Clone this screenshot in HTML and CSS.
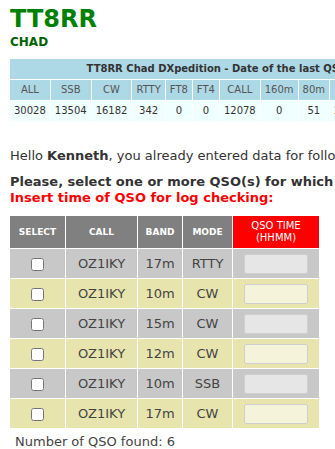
FILE: index.html
```html
<!DOCTYPE html>
<html>
<head>
<meta charset="utf-8">
<title>TT8RR</title>
<link rel="stylesheet" href="styles.css">
</head>
<body>
<div class="page">
  <h1 class="call">TT8RR</h1>
  <h2 class="country">CHAD</h2>

  <div class="stats-wrap">
    <table class="stats">
      <tr><td class="stats-title" colspan="17">TT8RR Chad DXpedition - Date of the last QSO in the log: 2024-04-17 11:35Z</td></tr>
      <tr class="stats-head">
        <td>ALL</td><td>SSB</td><td>CW</td><td>RTTY</td><td>FT8</td><td>FT4</td><td>CALL</td>
        <td>160m</td><td>80m</td><td>40m</td><td>30m</td><td>20m</td><td>17m</td><td>15m</td><td>12m</td><td>10m</td><td>6m</td>
      </tr>
      <tr class="stats-data">
        <td>30028</td><td>13504</td><td>16182</td><td>342</td><td>0</td><td>0</td><td>12078</td>
        <td>0</td><td>51</td><td>2361</td><td>2950</td><td>6405</td><td>5727</td><td>5463</td><td>3794</td><td>3277</td><td>0</td>
      </tr>
    </table>
  </div>

  <p class="hello">Hello <b>Kenneth</b>, you already entered data for following QSO(s) with TT8RR:</p>
  <p class="select-msg">Please, select one or more QSO(s) for which you want to request a log check.</p>
  <p class="insert-msg">Insert time of QSO for log checking:</p>

  <table class="qso">
    <colgroup>
      <col class="c-sel"><col class="c-call"><col class="c-band"><col class="c-mode"><col class="c-time">
    </colgroup>
    <tr class="qso-head">
      <th>SELECT</th><th>CALL</th><th>BAND</th><th>MODE</th><th class="time-head">QSO TIME<br>(HHMM)</th>
    </tr>
    <tr class="row-gray"><td><input type="checkbox"></td><td>OZ1IKY</td><td>17m</td><td>RTTY</td><td><input class="time-in" type="text"></td></tr>
    <tr class="row-khaki"><td><input type="checkbox"></td><td>OZ1IKY</td><td>10m</td><td>CW</td><td><input class="time-in" type="text"></td></tr>
    <tr class="row-gray"><td><input type="checkbox"></td><td>OZ1IKY</td><td>15m</td><td>CW</td><td><input class="time-in" type="text"></td></tr>
    <tr class="row-khaki"><td><input type="checkbox"></td><td>OZ1IKY</td><td>12m</td><td>CW</td><td><input class="time-in" type="text"></td></tr>
    <tr class="row-gray"><td><input type="checkbox"></td><td>OZ1IKY</td><td>10m</td><td>SSB</td><td><input class="time-in" type="text"></td></tr>
    <tr class="row-khaki"><td><input type="checkbox"></td><td>OZ1IKY</td><td>17m</td><td>CW</td><td><input class="time-in" type="text"></td></tr>
  </table>

  <p class="found">Number of QSO found: 6</p>
</div>
</body>
</html>
```

FILE: styles.css
```css
html, body {
  margin: 0;
  padding: 0;
  background: #fff;
  overflow: hidden;
}
body {
  font-family: "DejaVu Sans", Verdana, sans-serif;
  color: #333;
}
.page {
  padding: 5px 0 0 10px;
}
.call {
  margin: 0;
  font-size: 24px;
  line-height: 28px;
  font-weight: bold;
  color: #008000;
}
.country {
  margin: 2px 0 0;
  font-size: 12px;
  line-height: 14px;
  font-weight: bold;
  color: #006400;
}
.stats-wrap {
  margin-top: 10px;
  width: 325px;
  overflow: hidden;
}
.stats {
  border-collapse: collapse;
  white-space: nowrap;
  font-size: 10px;
  line-height: 12px;
  color: #444;
}
.stats td {
  padding: 4px 4px;
  text-align: center;
}
.stats td + td {
  border-left: 1px solid #fff;
}
.stats tr + tr td {
  border-top: 1px solid #fff;
}
.stats-title {
  background: #add8e6;
  font-weight: bold;
  color: #333;
}
.stats-head td {
  background: #add8e6;
  color: #555;
}
.stats-data td {
  background: #f0ffff;
  color: #333;
}
.hello, .select-msg, .insert-msg {
  margin: 0;
  font-size: 13px;
  line-height: 16px;
  white-space: nowrap;
}
.hello {
  margin-top: 27px;
}
.select-msg {
  margin-top: 10px;
  font-weight: bold;
}
.insert-msg {
  font-weight: bold;
  color: #ff0000;
}
.qso {
  margin-top: 10px;
  width: 309px;
  table-layout: fixed;
  border-collapse: separate;
  border-spacing: 0;
}
.c-sel { width: 55px; }
.c-call { width: 72px; }
.c-band { width: 45px; }
.c-mode { width: 50px; }
.c-time { width: 87px; }
.qso th, .qso td {
  text-align: center;
  vertical-align: middle;
  padding: 0;
}
.qso th + th, .qso td + td {
  border-left: 1px solid #fff;
}
.qso tr + tr td {
  border-top: 1px solid #fff;
}
.qso-head th {
  height: 32px;
  background: #808080;
  color: #fff;
  font-size: 9px;
  line-height: 12px;
  font-weight: bold;
}
.qso-head .time-head {
  background: #ff0000;
  font-size: 10px;
  font-weight: normal;
}
.qso td {
  height: 29px;
  font-size: 13px;
  color: #444;
}
.row-gray td {
  background: #c8c8c8;
}
.row-khaki td {
  background: #e8e4ae;
}
.qso input[type="checkbox"] {
  margin: 0;
  width: 13px;
  height: 13px;
  vertical-align: middle;
}
.time-in {
  box-sizing: border-box;
  width: 64px;
  height: 20px;
  margin: 0;
  padding: 0 3px;
  border: 1px solid #cfcfcf;
  border-radius: 2px;
  background: rgba(255, 255, 255, 0.55);
  vertical-align: middle;
}
.found {
  margin: 6px 0 0 5px;
  font-size: 13px;
  line-height: 16px;
  color: #444;
}
```
